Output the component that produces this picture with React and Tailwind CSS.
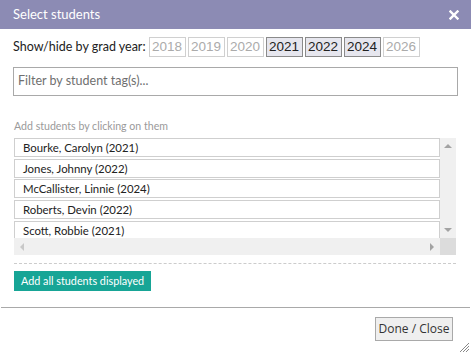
import React from 'react';

const years = [
  { y: '2018', on: false },
  { y: '2019', on: false },
  { y: '2020', on: false },
  { y: '2021', on: true },
  { y: '2022', on: true },
  { y: '2024', on: true },
  { y: '2026', on: false },
];

const students = [
  'Bourke, Carolyn (2021)',
  'Jones, Johnny (2022)',
  'McCallister, Linnie (2024)',
  'Roberts, Devin (2022)',
  'Scott, Robbie (2021)',
];

const App = () => {
  return (
    <div className="relative w-[471px] h-[354px] bg-white font-['Lato',sans-serif] overflow-hidden">
      {/* Title bar */}
      <div className="h-[29px] bg-[#8c8bb4] flex items-center justify-between pl-[13px] pr-[12px]">
        <span className="text-white text-[13px]">Select students</span>
        <svg width="10" height="10" viewBox="0 0 10 10">
          <path d="M1.5 1.5 L8.5 8.5 M8.5 1.5 L1.5 8.5" stroke="#fff" strokeWidth="2.4" strokeLinecap="square" />
        </svg>
      </div>

      {/* Grad year toggles */}
      <div className="flex items-center mt-[8px] pl-[13px]">
        <span className="text-[12.5px] text-[#222] mr-[3px] whitespace-nowrap">Show/hide by grad year:</span>
        <div className="flex gap-[2px]">
          {years.map((item) => (
            <div
              key={item.y}
              className={
                item.on
                  ? "h-[20px] w-[37px] flex items-center justify-center border border-[#8a8a8a] bg-[#e6e6ee] text-[#222] text-[13.5px] font-['Liberation_Sans',sans-serif]"
                  : "h-[20px] w-[37px] flex items-center justify-center border border-[#d0d0d0] bg-white text-[#ababab] text-[13.5px] font-['Liberation_Sans',sans-serif]"
              }
            >
              {item.y}
            </div>
          ))}
        </div>
      </div>

      {/* Filter */}
      <div className="mx-[13px] mt-[10px] h-[29px] border border-[#a9a9a9] flex items-center px-[4px]">
        <span className="text-[12.5px] text-[#6f6f6f]">Filter by student tag(s)...</span>
      </div>

      <div className="pl-[14px] mt-[23px] h-[14px] leading-[14px] text-[10.6px] text-[#9a9a9a]">Add students by clicking on them</div>

      {/* Student list */}
      <div className="ml-[14px] mt-[5px] w-[442px]">
        <div className="flex h-[100px]">
          <div className="w-[426px] overflow-hidden">
            {students.map((s) => (
              <div key={s} className="h-[19px] mb-[1.7px] border border-[#cfcfcf] flex items-center pl-[8px] text-[11.4px] text-[#222]">
                {s}
              </div>
            ))}
          </div>
          <div className="w-[16px] bg-[#f0f0f0] flex flex-col justify-between items-center py-[6px]">
            <svg width="8" height="4" viewBox="0 0 8 4"><path d="M4 0 L8 4 L0 4 Z" fill="#a3a3a3" /></svg>
            <svg width="8" height="4" viewBox="0 0 8 4"><path d="M0 0 L8 0 L4 4 Z" fill="#a3a3a3" /></svg>
          </div>
        </div>
        <div className="flex h-[17px]">
          <div className="w-[426px] bg-[#f0f0f0] flex items-center justify-between px-[6px]">
            <svg width="4" height="8" viewBox="0 0 4 8"><path d="M4 0 L4 8 L0 4 Z" fill="#c8c8c8" /></svg>
            <svg width="4" height="8" viewBox="0 0 4 8"><path d="M0 0 L4 4 L0 8 Z" fill="#a3a3a3" /></svg>
          </div>
          <div className="w-[16px] bg-[#dcdcdc]"></div>
        </div>
      </div>

      <div className="ml-[14px] w-[442px] mt-[8px] border-t border-dashed border-[#cccccc]"></div>

      <div className="ml-[14px] mt-[7px] flex">
        <div className="flex items-center h-[20px] px-[7px] bg-[#17a596] text-white text-[10.8px] whitespace-nowrap">
          Add all students displayed
        </div>
      </div>

      {/* Footer */}
      <div className="ml-[1px] mr-[1px] mt-[16px] border-t border-[#a9a9a9]"></div>
      <div className="flex justify-end pr-[18px] mt-[9px]">
        <div className="h-[24px] w-[78px] flex items-center justify-center border border-[#a9a9a9] bg-[#efefef] text-[12px] text-[#333] font-['Open_Sans',sans-serif] whitespace-nowrap">
          Done / Close
        </div>
      </div>

      {/* resize grip */}
      <svg className="absolute right-[2px] bottom-[2px]" width="10" height="10" viewBox="0 0 10 10">
        <path d="M10 1 L1 10 M10 4 L4 10 M10 7 L7 10" stroke="#888" strokeWidth="1" />
      </svg>
    </div>
  );
};

export default App;
